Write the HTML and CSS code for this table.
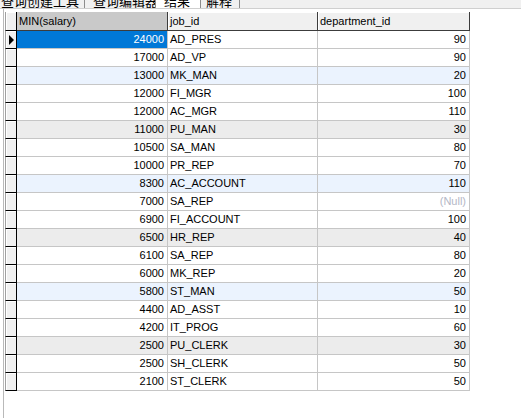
FILE: index.html
```html
<!DOCTYPE html>
<html>
<head>
<meta charset="utf-8">
<link rel="stylesheet" href="styles.css">
</head>
<body>
<div class="tabs">
  <div class="tab t1"><span>查询创建工具</span></div>
  <div class="tab t2"><span>查询编辑器</span></div>
  <div class="tab t3 active"><span>结果</span></div>
  <div class="tab t4"><span>解释</span></div>
</div>
<div class="panel">
  <div class="grid">
    <div class="row head">
      <div class="ind"></div>
      <div class="hc sorted">MIN(salary)</div>
      <div class="hc">job_id</div>
      <div class="hc">department_id</div>
    </div>
    <div class="row current"><div class="ind"><span class="arrow"></span></div><div class="c num sel">24000</div><div class="c">AD_PRES</div><div class="c num">90</div></div>
    <div class="row"><div class="ind"></div><div class="c num">17000</div><div class="c">AD_VP</div><div class="c num">90</div></div>
    <div class="row blue"><div class="ind"></div><div class="c num">13000</div><div class="c">MK_MAN</div><div class="c num">20</div></div>
    <div class="row"><div class="ind"></div><div class="c num">12000</div><div class="c">FI_MGR</div><div class="c num">100</div></div>
    <div class="row"><div class="ind"></div><div class="c num">12000</div><div class="c">AC_MGR</div><div class="c num">110</div></div>
    <div class="row grey"><div class="ind"></div><div class="c num">11000</div><div class="c">PU_MAN</div><div class="c num">30</div></div>
    <div class="row"><div class="ind"></div><div class="c num">10500</div><div class="c">SA_MAN</div><div class="c num">80</div></div>
    <div class="row"><div class="ind"></div><div class="c num">10000</div><div class="c">PR_REP</div><div class="c num">70</div></div>
    <div class="row blue"><div class="ind"></div><div class="c num">8300</div><div class="c">AC_ACCOUNT</div><div class="c num">110</div></div>
    <div class="row"><div class="ind"></div><div class="c num">7000</div><div class="c">SA_REP</div><div class="c num null">(Null)</div></div>
    <div class="row"><div class="ind"></div><div class="c num">6900</div><div class="c">FI_ACCOUNT</div><div class="c num">100</div></div>
    <div class="row grey"><div class="ind"></div><div class="c num">6500</div><div class="c">HR_REP</div><div class="c num">40</div></div>
    <div class="row"><div class="ind"></div><div class="c num">6100</div><div class="c">SA_REP</div><div class="c num">80</div></div>
    <div class="row"><div class="ind"></div><div class="c num">6000</div><div class="c">MK_REP</div><div class="c num">20</div></div>
    <div class="row blue"><div class="ind"></div><div class="c num">5800</div><div class="c">ST_MAN</div><div class="c num">50</div></div>
    <div class="row"><div class="ind"></div><div class="c num">4400</div><div class="c">AD_ASST</div><div class="c num">10</div></div>
    <div class="row"><div class="ind"></div><div class="c num">4200</div><div class="c">IT_PROG</div><div class="c num">60</div></div>
    <div class="row grey"><div class="ind"></div><div class="c num">2500</div><div class="c">PU_CLERK</div><div class="c num">30</div></div>
    <div class="row"><div class="ind"></div><div class="c num">2500</div><div class="c">SH_CLERK</div><div class="c num">50</div></div>
    <div class="row"><div class="ind"></div><div class="c num">2100</div><div class="c">ST_CLERK</div><div class="c num">50</div></div>
  </div>
</div>
</body>
</html>
```
FILE: styles.css
```css
* { box-sizing: border-box; }
html, body { margin: 0; padding: 0; background: #fff; }
body {
  font-family: "Liberation Sans", Arial, sans-serif;
  font-size: 11px;
  color: #000;
  height: 418px;
  overflow: hidden;
  display: flex;
  flex-direction: column;
}
.tabs {
  height: 9px;
  background: #f0f0f0;
  border-bottom: 1px solid #cfcfcf;
  display: flex;
  overflow: hidden;
  flex: none;
}
.tab {
  height: 8px;
  border-right: 1px solid #8c8c8c;
  font-family: "Noto Sans CJK SC", sans-serif;
  font-size: 13px;
  line-height: 13px;
  overflow: hidden;
}
.tab span { display: block; margin-top: -6px; white-space: nowrap; }
.t1 { width: 85px; padding-left: 1px; }
.t2 { width: 71px; padding-left: 8px; }
.t3 { width: 45px; padding-left: 8px; background: #fff; }
.t4 { width: 39px; padding-left: 5px; }
.panel {
  flex: 1;
  margin-left: 3px;
  border-left: 1px solid #b9b9b9;
  padding: 3px 0 0 1px;
}
.grid { display: flex; flex-direction: column; width: 465px; }
.row {
  display: grid;
  grid-template-columns: 12px 151px 150px 152px;
  height: 18px;
}
.row.head { height: 19px; }
.ind {
  background: #f0f0f0;
  border-left: 1px solid #a0a0a0;
  border-right: 1px solid #000;
  border-bottom: 1px solid #000;
  box-shadow: inset 1px 1px 0 #fff;
  display: flex;
  align-items: center;
  justify-content: center;
}
.arrow {
  width: 0; height: 0;
  border-left: 5px solid #000;
  border-top: 5px solid transparent;
  border-bottom: 5px solid transparent;
  margin-left: 1px;
}
.hc {
  background: #f0f0f0;
  border-right: 1px solid #3c3c3c;
  border-bottom: 1px solid #3c3c3c;
  box-shadow: inset 1px 1px 0 #fff;
  padding-left: 2px;
  line-height: 18px;
  white-space: nowrap;
}
.hc.sorted { background: #c9c9c9; box-shadow: none; }
.c {
  border-right: 1px solid #c6c6c6;
  border-bottom: 1px solid #c6c6c6;
  padding: 0 2px;
  line-height: 17px;
  white-space: nowrap;
  overflow: hidden;
}
.c.num { text-align: right; padding-right: 3px; }
.c.sel { background: #0078d7; color: #fff; }
.row.blue .c { background: #ebf3fe; }
.row.grey .c { background: #ececec; }
.null { color: #b3b7c6; }
```
